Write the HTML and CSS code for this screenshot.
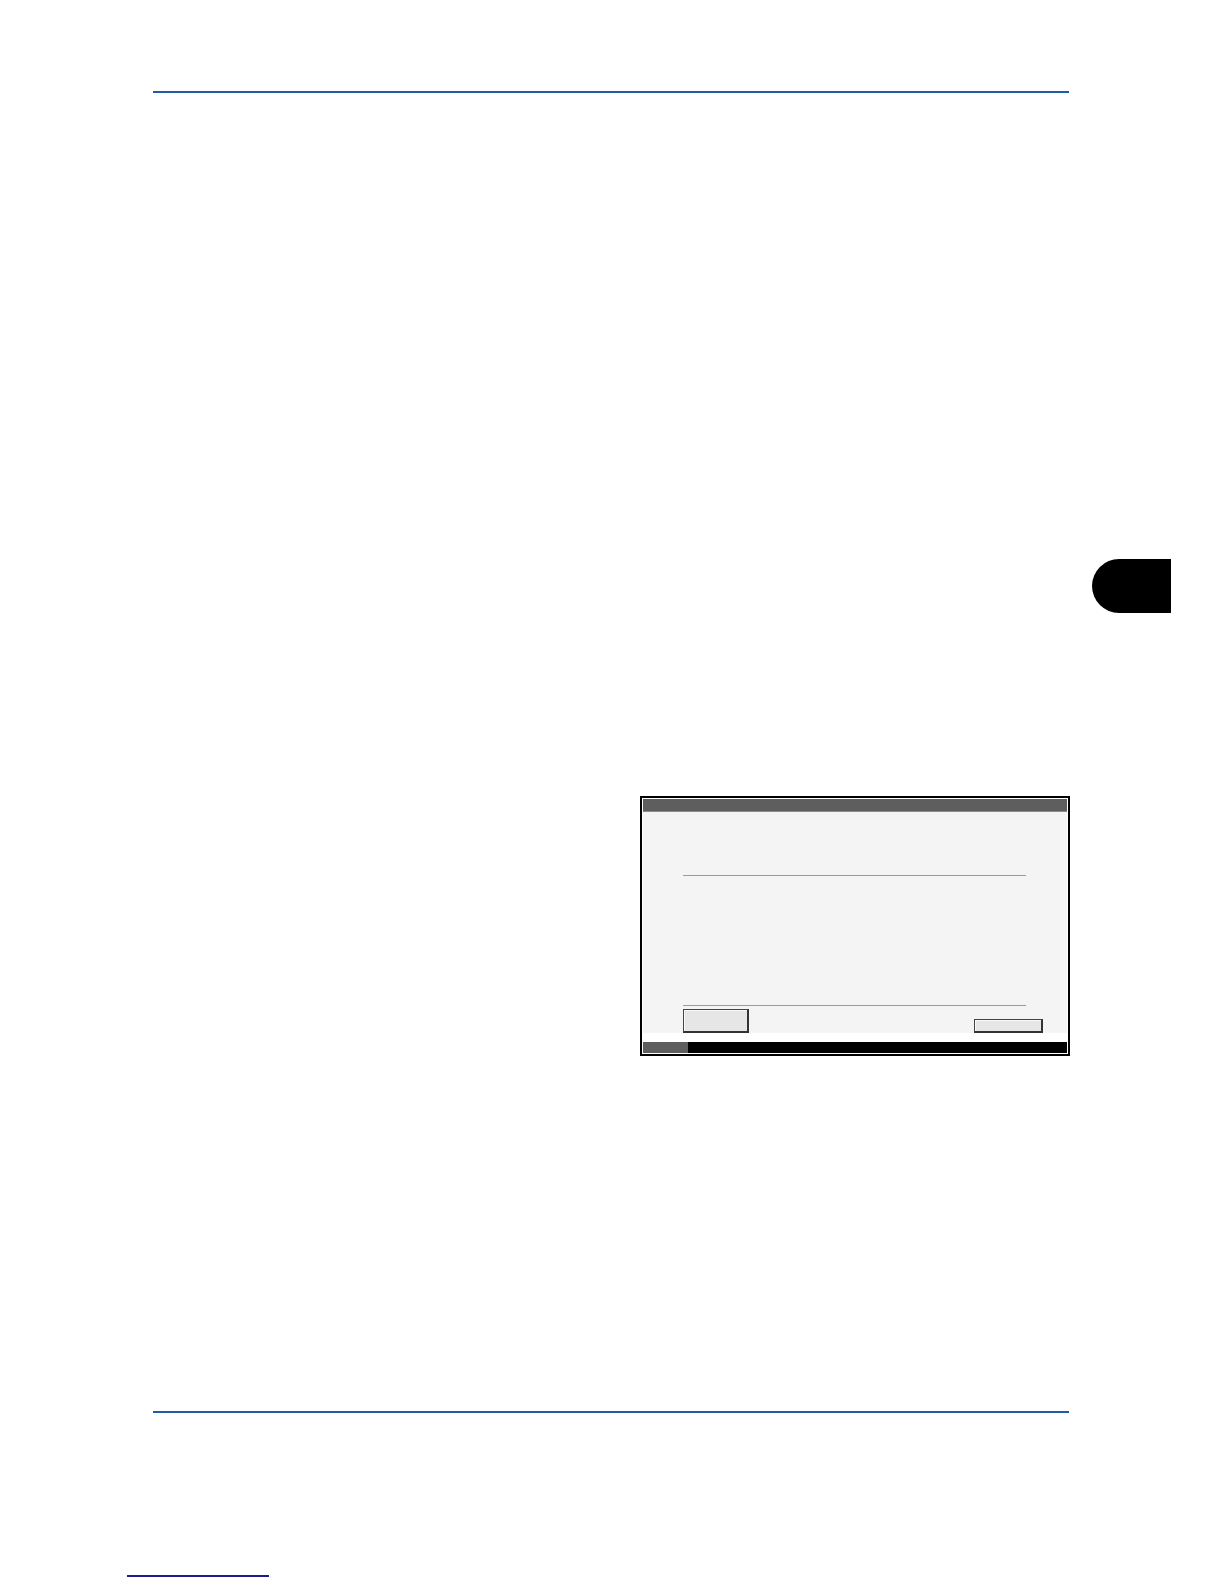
FILE: index.html
```html
<!DOCTYPE html>
<html lang="en">
<head>
<meta charset="utf-8">
<title>Page</title>
<link rel="stylesheet" href="styles.css">
</head>
<body>
<div class="page">
  <div class="column">
    <div class="rule rule-top"></div>
    <div class="chapter-tab"></div>
    <div class="screen">
      <div class="screen-header"></div>
      <div class="screen-body">
        <div class="sep sep-1"></div>
        <div class="sep sep-2"></div>
        <div class="button-row">
          <div class="btn btn-left"></div>
          <div class="btn btn-right"></div>
        </div>
      </div>
      <div class="status-bar"><div class="status-seg"></div></div>
    </div>
    <div class="rule rule-bottom"></div>
  </div>
  <div class="footer-link"></div>
</div>
</body>
</html>
```

FILE: styles.css
```css
html, body {
  margin: 0;
  padding: 0;
  background: #ffffff;
  font-family: "Liberation Sans", Arial, sans-serif;
}

.page {
  width: 1224px;
  height: 1584px;
  box-sizing: border-box;
  padding-top: 91px;
  overflow: hidden;
}

.column {
  margin-left: 153px;
  width: 916px;
}

.rule {
  height: 2px;
  background: #1f5ca6;
}

.chapter-tab {
  margin-top: 466px;
  margin-left: 939px;
  width: 79px;
  height: 54px;
  background: #000;
  border-radius: 27px 0 0 27px;
}

.screen {
  margin-top: 183px;
  margin-left: 487px;
  width: 430px;
  height: 260px;
  box-sizing: border-box;
  border: 2px solid #000;
  padding: 1px;
  background: #fff;
  display: flex;
  flex-direction: column;
}

.screen-header {
  height: 14px;
  background: #5e5e5e;
  border-bottom: 1px solid #8a8a8a;
  box-sizing: border-box;
}

.screen-body {
  flex: 1;
  background: #f4f4f4;
  padding: 0 24px 0 40px;
  display: flex;
  flex-direction: column;
}

.sep {
  width: 343px;
  height: 1px;
  background: #9a9a9a;
}

.sep-1 {
  margin-top: 63px;
}

.sep-2 {
  margin-top: 129px;
}

.button-row {
  margin-top: 3px;
  display: flex;
  justify-content: space-between;
  align-items: flex-end;
}

.btn {
  box-sizing: border-box;
  background: #e6e6e6;
  border-top: 1px solid #444;
  border-left: 1px solid #444;
  border-right: 2px solid #333;
  border-bottom: 2px solid #333;
  box-shadow: inset 1px 1px 0 #fafafa;
}

.btn-left {
  width: 66px;
  height: 24px;
}

.btn-right {
  width: 69px;
  height: 14px;
}

.status-bar {
  height: 11px;
  margin-top: 9px;
  background: #000;
  display: flex;
}

.status-seg {
  width: 45px;
  background: #5e5e5e;
}

.rule-bottom {
  margin-top: 355px;
}

.footer-link {
  margin-top: 162px;
  margin-left: 127px;
  width: 142px;
  height: 2px;
  background: #1c1c8a;
}
```
